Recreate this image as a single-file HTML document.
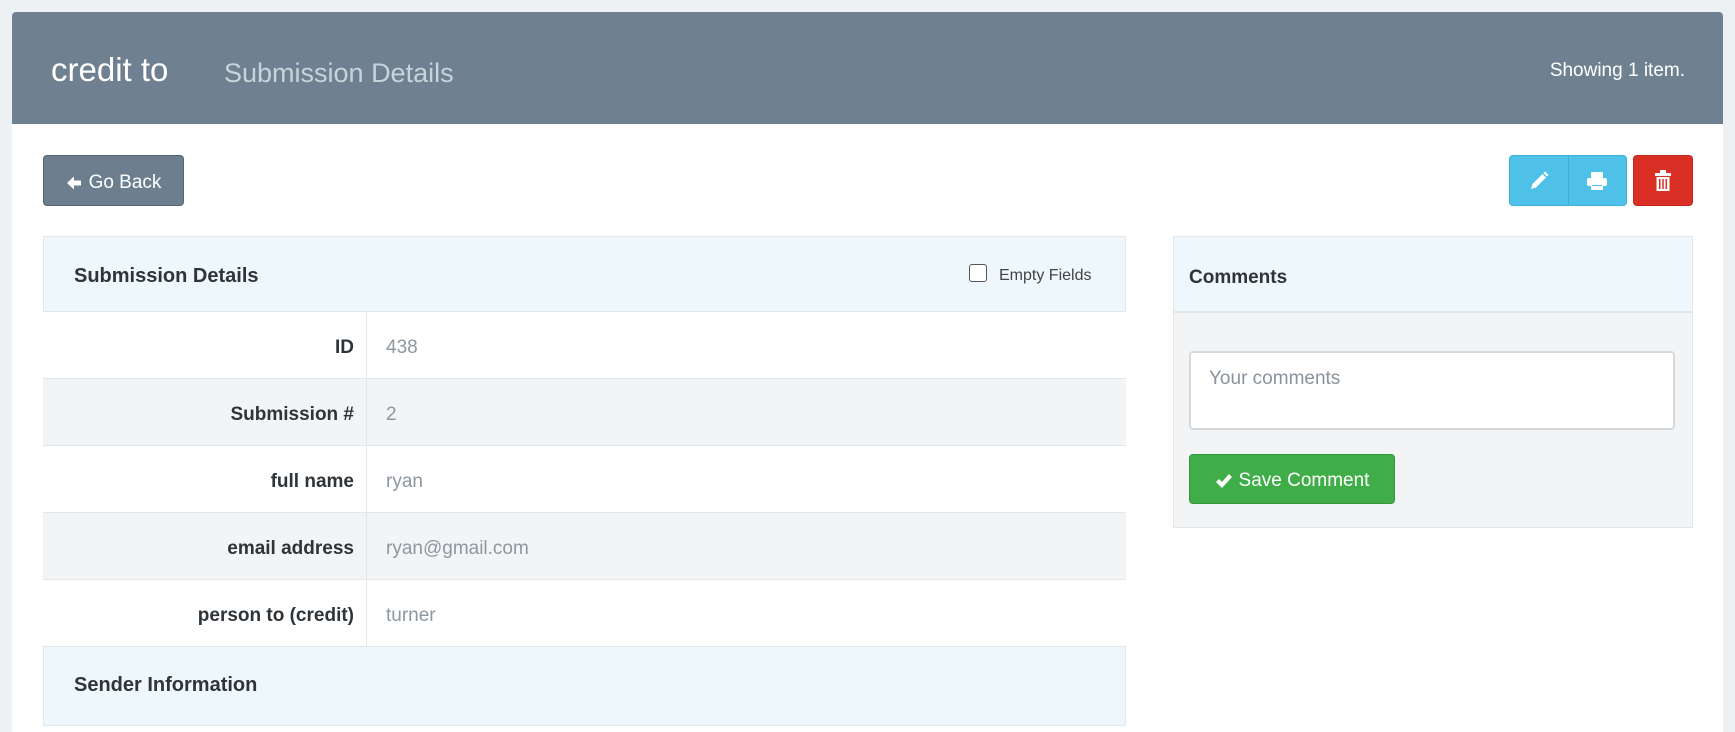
<!DOCTYPE html>
<html><head><meta charset="utf-8"><style>
*{box-sizing:border-box;margin:0;padding:0}
body{width:1735px;height:723px;background:#edf1f4;font-family:"Liberation Sans",sans-serif;position:relative;overflow:hidden;color:#333}
.abs{position:absolute}
#card{left:12px;top:12px;width:1711px;height:720px;background:#fff;border-radius:4px 4px 0 0}
#hdr{left:12px;top:12px;width:1711px;height:112px;background:#6f8090;border-radius:4px 4px 0 0}
.btn{position:absolute;border-radius:4px;color:#fff;display:flex;align-items:center;justify-content:center}
.row{position:absolute;left:43px;width:1083px;height:67px;border-bottom:1px solid #e3e7ea;font-size:19px}
.row .l{position:absolute;left:0;width:324px;top:0;bottom:0;border-right:1px solid #e3e7ea;text-align:right;padding-right:12px;font-weight:bold;line-height:72px;color:#2f3438}
.row .v{position:absolute;left:343px;line-height:72px;color:#8d979f}
</style></head><body>
<div id="card" class="abs"></div>
<div id="hdr" class="abs"></div>
<div class="abs" style="left:51px;top:51px;font-size:33px;color:#fff">credit to</div>
<div class="abs" style="left:224px;top:58px;font-size:27px;color:#c8d3dc">Submission Details</div>
<div class="abs" style="right:50px;top:60px;font-size:19px;color:#fff">Showing 1 item.</div>

<div class="btn" style="left:43px;top:155px;width:141px;height:51px;background:#6d7f8f;border:1px solid #55646f;font-size:19px;padding-top:4px">
<svg width="16" height="16" viewBox="0 0 16 16" style="margin-right:7px"><path d="M1 8 L8 1.5 V5.5 H15 V10.5 H8 V14.5 Z" fill="#fff"/></svg>Go Back</div>

<div class="btn" style="left:1509px;top:155px;width:118px;height:51px;background:#4fc1e9;border:1px solid #3bb1dc;justify-content:flex-start">
 <div style="width:59px;height:100%;display:flex;align-items:center;justify-content:center;border-right:1px solid #3aaed8">
 <svg width="20" height="20" viewBox="0 0 20 20"><path d="M2 18 L3.5 13 L13.5 3 L17 6.5 L7 16.5 Z" fill="#fff"/><path d="M14.5 2 L16 0.5 L19.5 4 L18 5.5Z" fill="#fff"/></svg></div>
 <div style="width:58px;height:100%;display:flex;align-items:center;justify-content:center">
 <svg width="22" height="20" viewBox="0 0 22 20"><rect x="5" y="1" width="12" height="6" rx="1" fill="#fff"/><rect x="1" y="7" width="20" height="8" rx="2" fill="#fff"/><rect x="5" y="13" width="12" height="6" fill="#fff"/><rect x="6" y="14" width="10" height="1" fill="#4fc1e9"/></svg></div>
</div>
<div class="btn" style="left:1633px;top:155px;width:60px;height:51px;background:#da2f24;border:1px solid #c2271d">
<svg width="18" height="22" viewBox="0 0 18 22"><rect x="6" y="0" width="6" height="3" fill="#fff"/><rect x="1" y="3" width="16" height="3" fill="#fff"/><path d="M2.5 7 H15.5 V21 H2.5Z" fill="#fff"/><rect x="5" y="9" width="1.5" height="10" fill="#da2f24"/><rect x="8.3" y="9" width="1.5" height="10" fill="#da2f24"/><rect x="11.5" y="9" width="1.5" height="10" fill="#da2f24"/></svg></div>

<!-- left panel -->
<div class="abs" style="left:43px;top:236px;width:1083px;height:490px;border:1px solid #e3e7ea"></div>
<div class="abs" style="left:43px;top:236px;width:1083px;height:76px;background:#edf7fc;border:1px solid #e3e7ea"></div>
<div class="abs" style="left:74px;top:265px;font-size:20px;font-weight:bold;color:#2f3438">Submission Details</div>
<div class="abs" style="left:969px;top:264px;width:18px;height:18px;border:1px solid #555;border-radius:3px;background:#fff"></div>
<div class="abs" style="left:999px;top:267px;font-size:16px;color:#444">Empty Fields</div>
<div class="row" style="top:312px;background:#fff"><div class="l">ID</div><div class="v">438</div></div>
<div class="row" style="top:379px;background:#f3f4f6"><div class="l">Submission #</div><div class="v">2</div></div>
<div class="row" style="top:446px;background:#fff"><div class="l">full name</div><div class="v">ryan</div></div>
<div class="row" style="top:513px;background:#f3f4f6"><div class="l">email address</div><div class="v">ryan@gmail.com</div></div>
<div class="row" style="top:580px;background:#fff"><div class="l">person to (credit)</div><div class="v">turner</div></div>
<div class="abs" style="left:43px;top:646px;width:1083px;height:80px;background:#edf7fc;border:1px solid #e3e7ea"></div>
<div class="abs" style="left:74px;top:674px;font-size:20px;font-weight:bold;color:#2f3438">Sender Information</div>

<!-- comments -->
<div class="abs" style="left:1173px;top:236px;width:520px;height:292px;background:#f3f4f6;border:1px solid #e3e7ea"></div>
<div class="abs" style="left:1173px;top:236px;width:520px;height:77px;background:#edf7fc;border:1px solid #e3e7ea;border-bottom:2px solid #e3e7ea"></div>
<div class="abs" style="left:1189px;top:267px;font-size:19px;font-weight:bold;color:#2f3438">Comments</div>
<div class="abs" style="left:1189px;top:351px;width:486px;height:79px;background:#fff;border:2px solid #d5d9dc;border-radius:4px"></div>
<div class="abs" style="left:1209px;top:368px;font-size:19px;color:#8a939b">Your comments</div>
<div class="btn" style="left:1189px;top:454px;width:206px;height:50px;background:#3fae49;border:1px solid #35963e;font-size:19px;padding-top:4px">
<svg width="18" height="16" viewBox="0 0 18 16" style="margin-right:6px"><path d="M1 9 L4 6 L7 9 L14 1 L17 4 L7 15 Z" fill="#fff"/></svg>Save Comment</div>
</body></html>
